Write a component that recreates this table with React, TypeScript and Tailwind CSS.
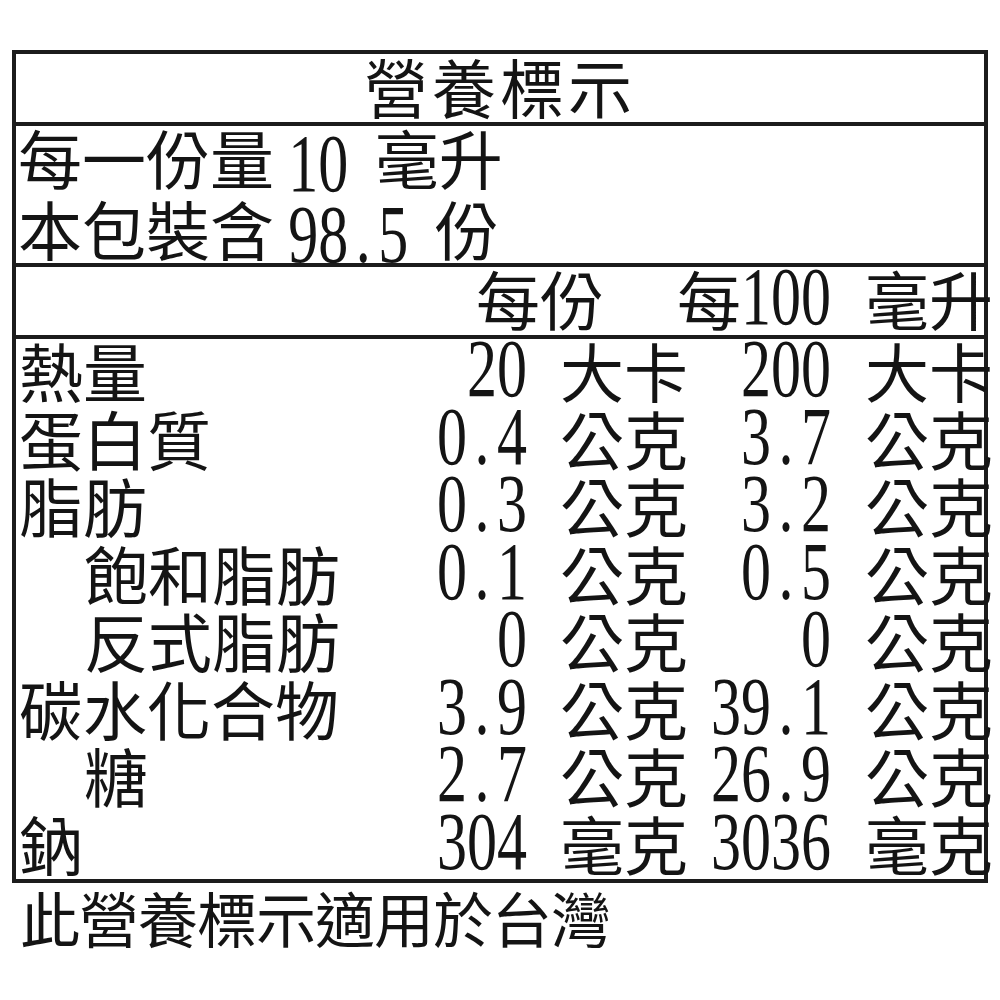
type Row = {
  label: string;
  indent?: boolean;
  v1: string;
  u1: string;
  v2: string;
  u2: string;
};

const rows: Row[] = [
  { label: '熱量', v1: '20', u1: '大卡', v2: '200', u2: '大卡' },
  { label: '蛋白質', v1: '0.4', u1: '公克', v2: '3.7', u2: '公克' },
  { label: '脂肪', v1: '0.3', u1: '公克', v2: '3.2', u2: '公克' },
  { label: '飽和脂肪', indent: true, v1: '0.1', u1: '公克', v2: '0.5', u2: '公克' },
  { label: '反式脂肪', indent: true, v1: '0', u1: '公克', v2: '0', u2: '公克' },
  { label: '碳水化合物', v1: '3.9', u1: '公克', v2: '39.1', u2: '公克' },
  { label: '糖', indent: true, v1: '2.7', u1: '公克', v2: '26.9', u2: '公克' },
  { label: '鈉', v1: '304', u1: '毫克', v2: '3036', u2: '毫克' },
];

// half-width serif digits, stretched a bit to match the label print
function Num({ v, className = '' }: { v: string; className?: string }) {
  return (
    <span
      className={`inline-block origin-[50%_85%] translate-y-[7px] scale-y-[1.36] font-['Liberation_Serif',serif] text-[60px] leading-none tracking-normal ${className}`}
    >
      {v.split('').map((c, i) =>
        c === '.' ? (
          <span key={i} className="inline-block w-[0.5em] text-center">
            .
          </span>
        ) : (
          <span key={i}>{c}</span>
        )
      )}
    </span>
  );
}

const cols = 'grid grid-cols-[394px_117px_187px_117px_1fr]';

export default function App() {
  return (
    <div className="min-h-screen bg-white pl-[12px] pt-[50px] font-['Noto_Sans_CJK_TC',sans-serif] text-[64px] font-normal text-[#141414]">
      <div className="w-[976px] border-4 border-[#1c1c1c]">
        {/* Title */}
        <div className="flex h-[72px] items-center justify-center border-b-4 border-[#1c1c1c] pb-[6px] leading-[64px] tracking-[4px]">
          營養標示
        </div>

        {/* Serving info */}
        <div className="flex h-[141px] flex-col border-b-4 border-[#1c1c1c] pl-[2px] leading-[67px]">
          <div className="-mt-[3px] whitespace-nowrap">
            每一份量 <Num v="10" className="mr-[12px]" /> 毫升
          </div>
          <div className="whitespace-nowrap">
            本包裝含 <Num v="98.5" className="mr-[12px]" /> 份
          </div>
        </div>

        {/* Column header */}
        <div className={`${cols} h-[72px] items-center border-b-4 border-[#1c1c1c] pb-[8px] leading-[60px]`}>
          <div />
          <div className="col-span-2 whitespace-nowrap pl-[66px]">每份</div>
          <div className="flex justify-end whitespace-nowrap">
            每<Num v="100" />
          </div>
          <div className="whitespace-nowrap pl-[34px]">毫升</div>
        </div>

        {/* Nutrients */}
        <div className="flex flex-col">
          {rows.map((r) => (
            <div
              key={r.label}
              className={`${cols} h-[67.5px] items-center pb-[8px] leading-[58px]`}
            >
              <div className={`whitespace-nowrap ${r.indent ? 'pl-[68px]' : 'pl-[3px]'}`}>
                {r.label}
              </div>
              <div className="flex justify-end whitespace-nowrap">
                <Num v={r.v1} />
              </div>
              <div className="whitespace-nowrap pl-[33px]">{r.u1}</div>
              <div className="flex justify-end whitespace-nowrap">
                <Num v={r.v2} />
              </div>
              <div className="whitespace-nowrap pl-[34px]">{r.u2}</div>
            </div>
          ))}
        </div>
      </div>

      {/* Footnote */}
      <div className="pl-[8px] text-[60px] leading-[68px] tracking-[-1px]">
        此營養標示適用於台灣
      </div>
    </div>
  );
}
